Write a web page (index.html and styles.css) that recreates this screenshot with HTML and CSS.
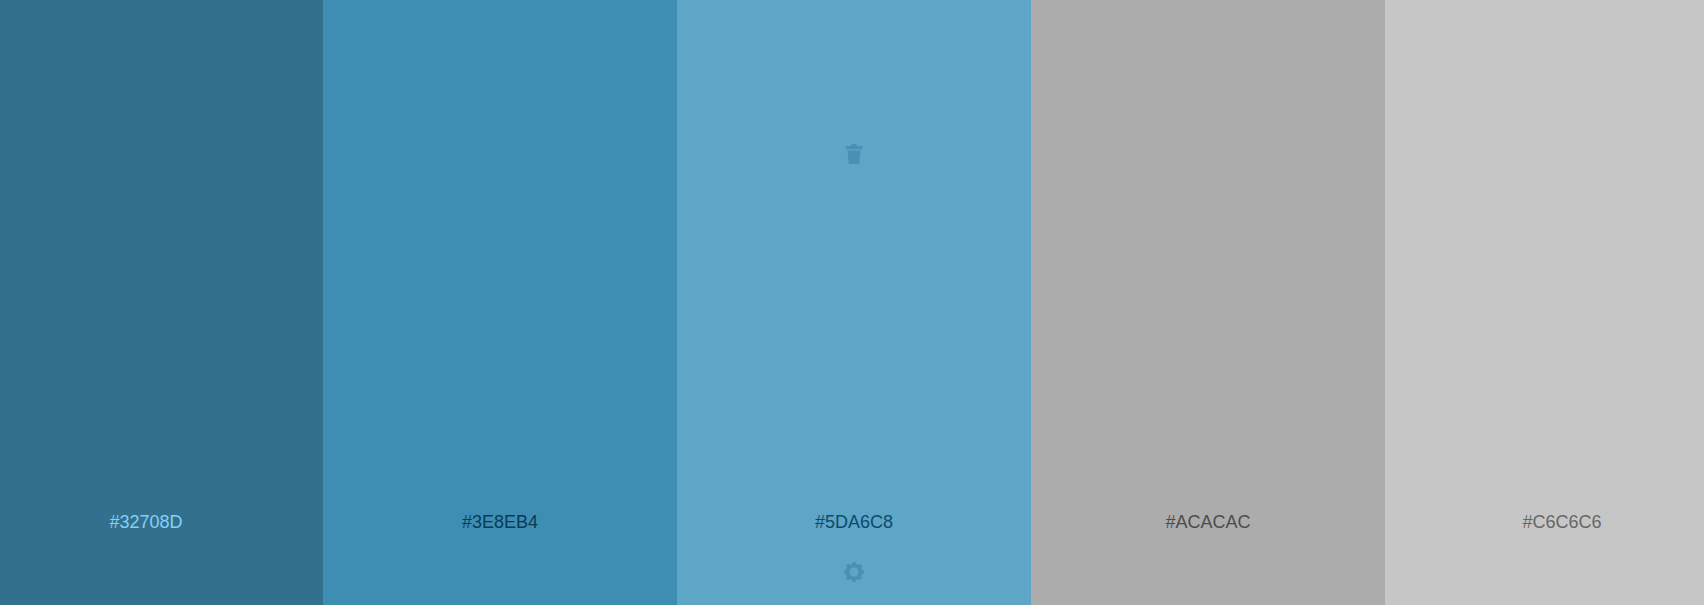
FILE: index.html
```html
<!DOCTYPE html>
<html lang="en">
<head>
  <meta charset="UTF-8">
  <title>Palette</title>
  <link rel="stylesheet" href="styles.css">
</head>
<body>
  <div class="palette">
    <div class="swatch swatch-1">
      <svg class="tool" viewBox="0 0 20 20"><use href="#trash"/></svg>
      <span class="hex">#32708D</span>
      <svg class="tool" viewBox="0 0 24 24"><use href="#gear"/></svg>
    </div>
    <div class="swatch swatch-2">
      <svg class="tool" viewBox="0 0 20 20"><use href="#trash"/></svg>
      <span class="hex">#3E8EB4</span>
      <svg class="tool" viewBox="0 0 24 24"><use href="#gear"/></svg>
    </div>
    <div class="swatch swatch-3 active">
      <svg class="tool" viewBox="0 0 20 20">
        <g id="trash">
          <path d="M7.800 0h4.400l.6 2h5.400v3.200H1.800V2h5.400z"/>
          <path d="M3.500 6.500h13l-1.200 12.500q-.1 1-1 1H5.700q-.9 0-1-1z"/>
        </g>
      </svg>
      <span class="hex">#5DA6C8</span>
      <svg class="tool" viewBox="0 0 24 24">
        <g id="gear">
          <circle class="gear-ring" cx="12" cy="12" r="7.700"/>
          <circle class="gear-teeth" cx="12" cy="12" r="10.800"/>
        </g>
      </svg>
    </div>
    <div class="swatch swatch-4">
      <svg class="tool" viewBox="0 0 20 20"><use href="#trash"/></svg>
      <span class="hex">#ACACAC</span>
      <svg class="tool" viewBox="0 0 24 24"><use href="#gear"/></svg>
    </div>
    <div class="swatch swatch-5">
      <svg class="tool" viewBox="0 0 20 20"><use href="#trash"/></svg>
      <span class="hex">#C6C6C6</span>
      <svg class="tool" viewBox="0 0 24 24"><use href="#gear"/></svg>
    </div>
  </div>
</body>
</html>
```

FILE: styles.css
```css
html, body {
  margin: 0;
  height: 100%;
  overflow: hidden;
}
body {
  font-family: "Liberation Sans", Arial, sans-serif;
}
.palette {
  display: flex;
  height: 605px;
  width: 1770px;
  margin-left: -31px;
}
.swatch {
  flex: 0 0 354px;
  display: flex;
  flex-direction: column;
  align-items: center;
  padding: 144px 0 23px;
  box-sizing: border-box;
}
.hex {
  font-size: 18px;
  line-height: 21px;
  margin-top: auto;
  margin-bottom: 29px;
}
.tool {
  width: 20px;
  height: 20px;
  fill: #4a90b5;
  visibility: hidden;
}
.active .tool {
  visibility: visible;
}
.gear-ring {
  fill: none;
  stroke: #4a90b5;
  stroke-width: 4.600;
}
.gear-teeth {
  fill: none;
  stroke: #4a90b5;
  stroke-width: 2.400;
  stroke-dasharray: 4.240 4.242;
  stroke-dashoffset: 2.120;
}
.swatch-1 { background: #32708d; color: #85d0f5; }
.swatch-2 { background: #3e8eb4; color: #0a3a55; }
.swatch-3 { background: #5da6c8; color: #0e4a6c; }
.swatch-4 { background: #acacac; color: #4c4c4c; }
.swatch-5 { background: #c6c6c6; color: #666666; }
```
